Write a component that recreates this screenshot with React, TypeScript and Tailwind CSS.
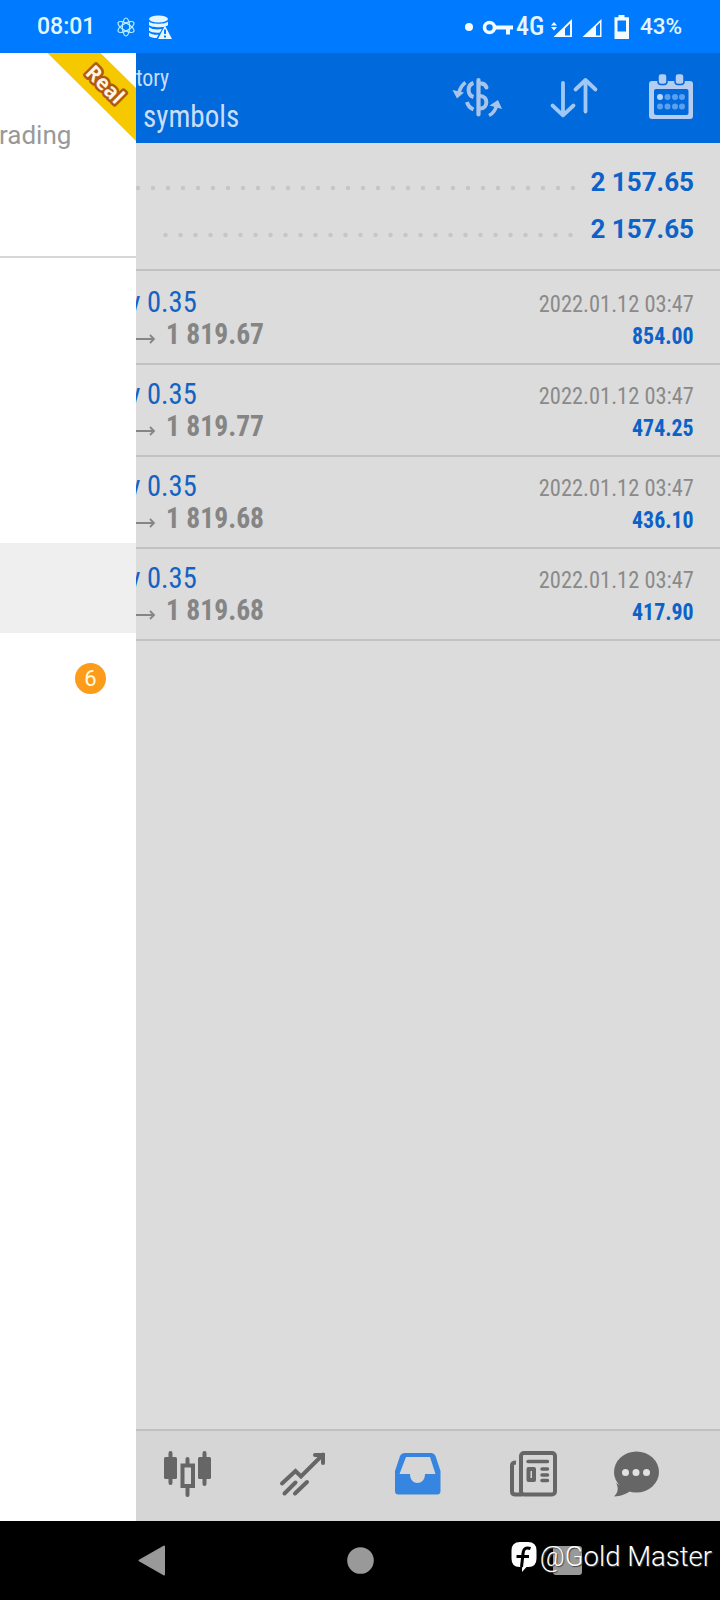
import React from 'react';

const COND = "font-['Roboto_Condensed','Roboto',sans-serif] font-stretch-condensed";

const deals = [
  { lot: 'y 0.35', price: '1 819.67', time: '2022.01.12 03:47', profit: '854.00' },
  { lot: 'y 0.35', price: '1 819.77', time: '2022.01.12 03:47', profit: '474.25' },
  { lot: 'y 0.35', price: '1 819.68', time: '2022.01.12 03:47', profit: '436.10' },
  { lot: 'y 0.35', price: '1 819.68', time: '2022.01.12 03:47', profit: '417.90' },
];

const StatusBar: React.FC = () => (
  <div className="flex h-[53px] items-center bg-[#007aff] text-[#e4f7ff]">
    <span className="ml-[37px] w-[80px] text-[23px] leading-[53px] font-medium">08:01</span>
    <svg className="h-[20px] w-[18px]" viewBox="0 0 18 20" fill="none" stroke="#b4ecff" strokeWidth="1.2">
      <ellipse cx="9" cy="10" rx="3.6" ry="9" />
      <ellipse cx="9" cy="10" rx="3.6" ry="9" transform="rotate(60 9 10)" />
      <ellipse cx="9" cy="10" rx="3.6" ry="9" transform="rotate(-60 9 10)" />
    </svg>
    <svg className="ml-[13px] h-[24px] w-[24px]" viewBox="148 14 24 24" fill="#e4f7ff">
      <ellipse cx="158.500" cy="18" rx="9.500" ry="3.500" />
      <path d="M149 20.500c2 3 17 3 19 0v3.500c-2 3-17 3-19 0zM149 26c2 2.500 9 3 13 2l-2 3.500c-4 .5-9 0-11-2zM149 31.500c2 2 6 2.500 9.500 2.300l-1.800 3.200c-3 0-6-.5-7.700-2z" />
      <path d="M165 24.500l7 13.500h-14zM164 28.500v4.500h2v-4.500zM164 34.500v2h2v-2z" fillRule="evenodd" />
    </svg>
    <svg className="ml-[293px] h-[24px] w-[49px]" viewBox="465 14 49 24" fill="#f4fbff">
      <circle cx="469" cy="26" r="4" />
      <circle cx="489.500" cy="26.500" r="5" fill="none" stroke="#f4fbff" strokeWidth="3.600" />
      <path d="M494 24.500h19v4h-3v5h-4v-5h-12z" />
    </svg>
    <span className={`ml-[2px] w-[34px] text-[26px] font-medium whitespace-nowrap ${COND}`}>4G</span>
    <svg className="h-[26px] w-[80px]" viewBox="550 13 80 26" fill="#f4fbff">
      <path d="M554 21l-3 3.500h6zM554 29.500l-3-3.500h6z" />
      <path d="M572 18v18h-18.500zM570 22.500l-5 5v7h5z" fillRule="evenodd" />
      <path d="M601.500 18v18h-19zM600 21.500l-4 4v9h4z" fillRule="evenodd" />
      <path d="M618.500 14h6v2.300h4.500v21.700h-14.500v-21.700h4zM617.500 19.500v11h8.500v-11z" fillRule="evenodd" />
    </svg>
    <span className="ml-[10px] text-[22.500px] font-medium whitespace-nowrap">43%</span>
  </div>
);

const Drawer: React.FC = () => (
  <aside className="relative flex w-[136px] shrink-0 flex-col overflow-hidden bg-white">
    <svg className="absolute top-0 right-0 h-[90px] w-[90px]" viewBox="46 53 90 90">
      <path d="M47.500 53h53l35.500 35v53z" fill="#f5c800" />
      <text
        x="0"
        y="0"
        transform="translate(100 89.500) rotate(45)"
        textAnchor="middle"
        className="font-['Open_Sans',sans-serif] text-[20.500px] font-bold"
        fill="#fff3e6"
        stroke="#b05a10"
        strokeWidth="5"
        strokeLinejoin="round"
        paintOrder="stroke"
      >
        Real
      </text>
    </svg>
    <div className="flex h-[205px] items-start border-b-2 border-[#d6d6d6] pt-[66px]">
      <span className="ml-[-1px] text-[26px] leading-[32px] text-[#999]">rading</span>
    </div>
    <div className="mt-[285px] h-[90px] bg-[#efefef]" />
    <div className="flex h-[90px] items-center justify-end pr-[30px]">
      <span className="flex h-[31px] w-[31px] items-center justify-center rounded-full bg-[#fd9c1b] pt-px text-[22px] leading-none text-[#fffbe0]">
        6
      </span>
    </div>
  </aside>
);

const Header: React.FC = () => (
  <header className="flex h-[90px] justify-between overflow-hidden bg-[#0069dc] pr-[26px] text-[#c9defa]">
    <div className={`flex flex-col items-start whitespace-nowrap ${COND}`}>
      <span className="mt-[10px] origin-left scale-x-[.91] text-[24px] leading-[30px]">tory</span>
      <span className="mt-[5px] ml-[7px] origin-left scale-x-[.91] text-[32px] leading-[36px]">symbols</span>
    </div>
    <div className="flex pt-[20px]">
      <svg className="h-[48px] w-[52px]" viewBox="451 73 52 48" fill="none" stroke="#a9c4ea">
        <path d="M478.500 80v34.500" strokeWidth="4.200" strokeLinecap="round" />
        <path d="M480 83.500q5-.5 6.500 4M480 96c8.500 0 8.500 12.500 0 12.500" strokeWidth="4" strokeLinecap="round" />
        <path d="M473.500 83c-6.500 2-6.500 12 0 14M467 102c1 4 3 6 6.500 7.500" strokeWidth="4" />
        <path d="M465.500 82.500c-4 3-5.500 6-6.500 10" strokeWidth="3.600" />
        <path d="M452.500 90l11.500 2.500-7 6z" fill="#a9c4ea" stroke="none" />
        <path d="M489 115.500c4-2 6.500-5 7.500-10" strokeWidth="3.600" />
        <path d="M489.500 105.500l8.500-5.500 4 9z" fill="#a9c4ea" stroke="none" />
      </svg>
      <svg className="ml-[46px] h-[48px] w-[50px]" viewBox="549 73 50 48" fill="none" stroke="#a0c8f6" strokeWidth="3.800" strokeLinecap="round" strokeLinejoin="round">
        <path d="M563 83v32M552.500 105.500l10.500 9.800 10.500-9.800" />
        <path d="M585.500 111.500v-31M575.500 89.500l10-9.500 10 9.500" />
      </svg>
      <svg className="ml-[49px] h-[48px] w-[46px]" viewBox="648 73 46 48">
        <path d="M652 81h38q3 0 3 3v32q0 3-3 3h-38q-3 0-3-3v-32q0-3 3-3z" fill="#b4cdf0" />
        <rect x="654" y="89" width="34.500" height="26" rx="2" fill="#0069dc" />
        <rect x="658" y="73.500" width="9" height="11" rx="3" fill="#b4cdf0" stroke="#0069dc" strokeWidth="1.500" />
        <rect x="675" y="73.500" width="9" height="11" rx="3" fill="#b4cdf0" stroke="#0069dc" strokeWidth="1.500" />
        <circle cx="660" cy="97" r="3" fill="#b9d6ff" />
        <path d="M667.500 97h.01M675 97h.01M682 97h.01M660 106.500h.01M667.500 106.500h.01M675 106.500h.01M682 106.500h.01" stroke="#5b9fee" strokeWidth="6" strokeLinecap="round" />
      </svg>
    </div>
  </header>
);

const Summary: React.FC = () => (
  <div className="flex h-[128px] flex-col border-b-2 border-[#c2c2c2] pt-[16px] pr-[26px]">
    <div className="flex h-[47px] items-center justify-between">
      <svg className="mt-[10px] h-[6px] w-[440px]" viewBox="0 0 440 6">
        <path d="M2 3h436" stroke="#c6c6c6" strokeWidth="4.400" strokeLinecap="round" strokeDasharray="0 15" />
      </svg>
      <span className="text-[26px] leading-[47px] font-bold whitespace-nowrap text-[#0c62c8]">2 157.65</span>
    </div>
    <div className="flex h-[47px] items-center justify-between">
      <svg className="mt-[10px] h-[6px] w-[440px]" viewBox="0 0 440 6">
        <path d="M29.500 3h406" stroke="#c6c6c6" strokeWidth="4.400" strokeLinecap="round" strokeDasharray="0 15" />
      </svg>
      <span className="text-[26px] leading-[47px] font-bold whitespace-nowrap text-[#0c62c8]">2 157.65</span>
    </div>
  </div>
);

const DealRow: React.FC<{ deal: (typeof deals)[number] }> = ({ deal }) => (
  <div className={`flex h-[92px] justify-between border-b-2 border-[#c2c2c2] pr-[26px] whitespace-nowrap ${COND}`}>
    <div className="flex flex-col items-start pt-[12px]">
      <span className="ml-[-11px] origin-right scale-x-[.95] text-[30px] leading-[34px] text-[#1462c4]">{deal.lot}</span>
      <div className="flex items-center text-[30px] leading-[30px] font-bold text-[#858585]">
        <svg className="mt-[9px] h-[12px] w-[30px]" viewBox="0 0 30 12" fill="none" stroke="#858585" strokeWidth="1.800">
          <path d="M0 6h18M14 2l4 4-4 4" />
        </svg>
        <span className="origin-left scale-x-[.92]">{deal.price}</span>
      </div>
    </div>
    <div className="flex flex-col items-end pt-[15px]">
      <span className="origin-right scale-x-[.935] text-[24px] leading-[32px] text-[#8a8a8a]">{deal.time}</span>
      <span className="origin-right scale-x-[.91] text-[24px] leading-[32px] font-bold text-[#0c62c8]">{deal.profit}</span>
    </div>
  </div>
);

const TabBar: React.FC = () => (
  <nav className="flex h-[92px] items-start border-t-2 border-[#c0c0c0] bg-[#d6d6d6] pt-[18px] pl-[26px]">
    <svg className="h-[52px] w-[52px]" viewBox="162 1449 52 52" fill="#666">
      <rect x="164" y="1457" width="13" height="22" rx="1.500" />
      <rect x="198" y="1457" width="13" height="22" rx="1.500" />
      <path d="M170.500 1453v30M204.500 1453v31M187.500 1459v6M187.500 1487v8" stroke="#666" strokeWidth="4" strokeLinecap="round" />
      <rect x="182.500" y="1465.500" width="10.500" height="20.500" fill="none" stroke="#666" strokeWidth="4" />
    </svg>
    <svg className="ml-[64px] h-[52px] w-[50px]" viewBox="278 1449 50 52" fill="none" stroke="#666" strokeWidth="4" strokeLinecap="round">
      <path d="M282 1483.500l13.500-12.500 5.500 5.500 22-22M315 1455h8v8M284.500 1493.500l11-11M295 1493.500l12-11.500" />
    </svg>
    <svg className="ml-[64px] h-[52px] w-[50px]" viewBox="392 1449 50 52">
      <path d="M405 1453h26q3 0 4.500 3l5 15v20q0 3.500-3.500 3.500h-38.500q-3.500 0-3.500-3.500v-20l5-15q1.500-3 5-3zM406 1457l-6.500 17h10.500c0 12 15 12 15 0h10.500l-5.500-17z" fill="#3685e0" fillRule="evenodd" />
    </svg>
    <svg className="ml-[65px] h-[52px] w-[52px]" viewBox="507 1449 52 52" fill="none" stroke="#666" strokeWidth="4" strokeLinejoin="round">
      <rect x="521" y="1453" width="34" height="41.500" rx="3" />
      <path d="M516 1462.500q-4 0-4 3v26q0 3 3.500 3h7" />
      <path d="M528 1461.500h19.500M542 1469h5.500M542 1475h5.500M542 1480.500h5.500" strokeWidth="3.500" strokeLinecap="round" />
      <rect x="528.500" y="1469" width="5.500" height="11" />
    </svg>
    <svg className="ml-[52px] h-[52px] w-[50px]" viewBox="611 1449 50 52">
      <ellipse cx="636.500" cy="1472" rx="22.500" ry="20.500" fill="#666" />
      <path d="M616 1483c3 5 2 10-2 13.500 7 0 12-3 16-5z" fill="#666" />
      <path d="M625.500 1472.500h.01M636 1472.500h.01M646.500 1472.500h.01" stroke="#e0e0e0" strokeWidth="7" strokeLinecap="round" />
    </svg>
  </nav>
);

const SystemNav: React.FC = () => (
  <div className="relative h-[79px] bg-black">
    <svg className="h-[79px] w-[720px]" viewBox="0 1521 720 79" fill="#999">
      <path d="M139.500 1560.500l24.500-14v28z" stroke="#999" strokeWidth="2" strokeLinejoin="round" />
      <circle cx="360.500" cy="1560.500" r="13.300" />
      <rect x="553" y="1546" width="29" height="29" rx="3" />
    </svg>
    <div className="absolute top-[19px] right-[8px] flex items-center text-white">
      <svg className="h-[32px] w-[26px]" viewBox="511 1542 26 32">
        <path d="M520 1543h8q8.500 0 8.500 8.500v8q0 8.500-8 8.500h-2l-4.500 5v-5h-2.500q-8 0-8-8.500v-8q0-8.500 8.500-8.500z" fill="#fff" />
        <path d="M530.500 1549.500q-7-2.500-7.500 5.500l-1.500 13M516.500 1557.500h12.500" fill="none" stroke="#000" strokeWidth="3" />
      </svg>
      <span className="ml-[3px] text-[27.500px] leading-[34px] font-light whitespace-nowrap [text-shadow:1px_1px_1px_#444]">@Gold Master</span>
    </div>
  </div>
);

const App: React.FC = () => {
  return (
    <div className="flex h-[1600px] w-[720px] flex-col overflow-hidden bg-black font-['Roboto',sans-serif]">
      <StatusBar />
      <div className="flex h-[1468px]">
        <Drawer />
        <main className="flex min-w-0 flex-1 flex-col overflow-hidden bg-[#dcdcdc]">
          <Header />
          <Summary />
          <div className="flex flex-1 flex-col pt-[2px]">
            {deals.map((deal, i) => (
              <DealRow key={i} deal={deal} />
            ))}
          </div>
          <TabBar />
        </main>
      </div>
      <SystemNav />
    </div>
  );
};

export default App;
